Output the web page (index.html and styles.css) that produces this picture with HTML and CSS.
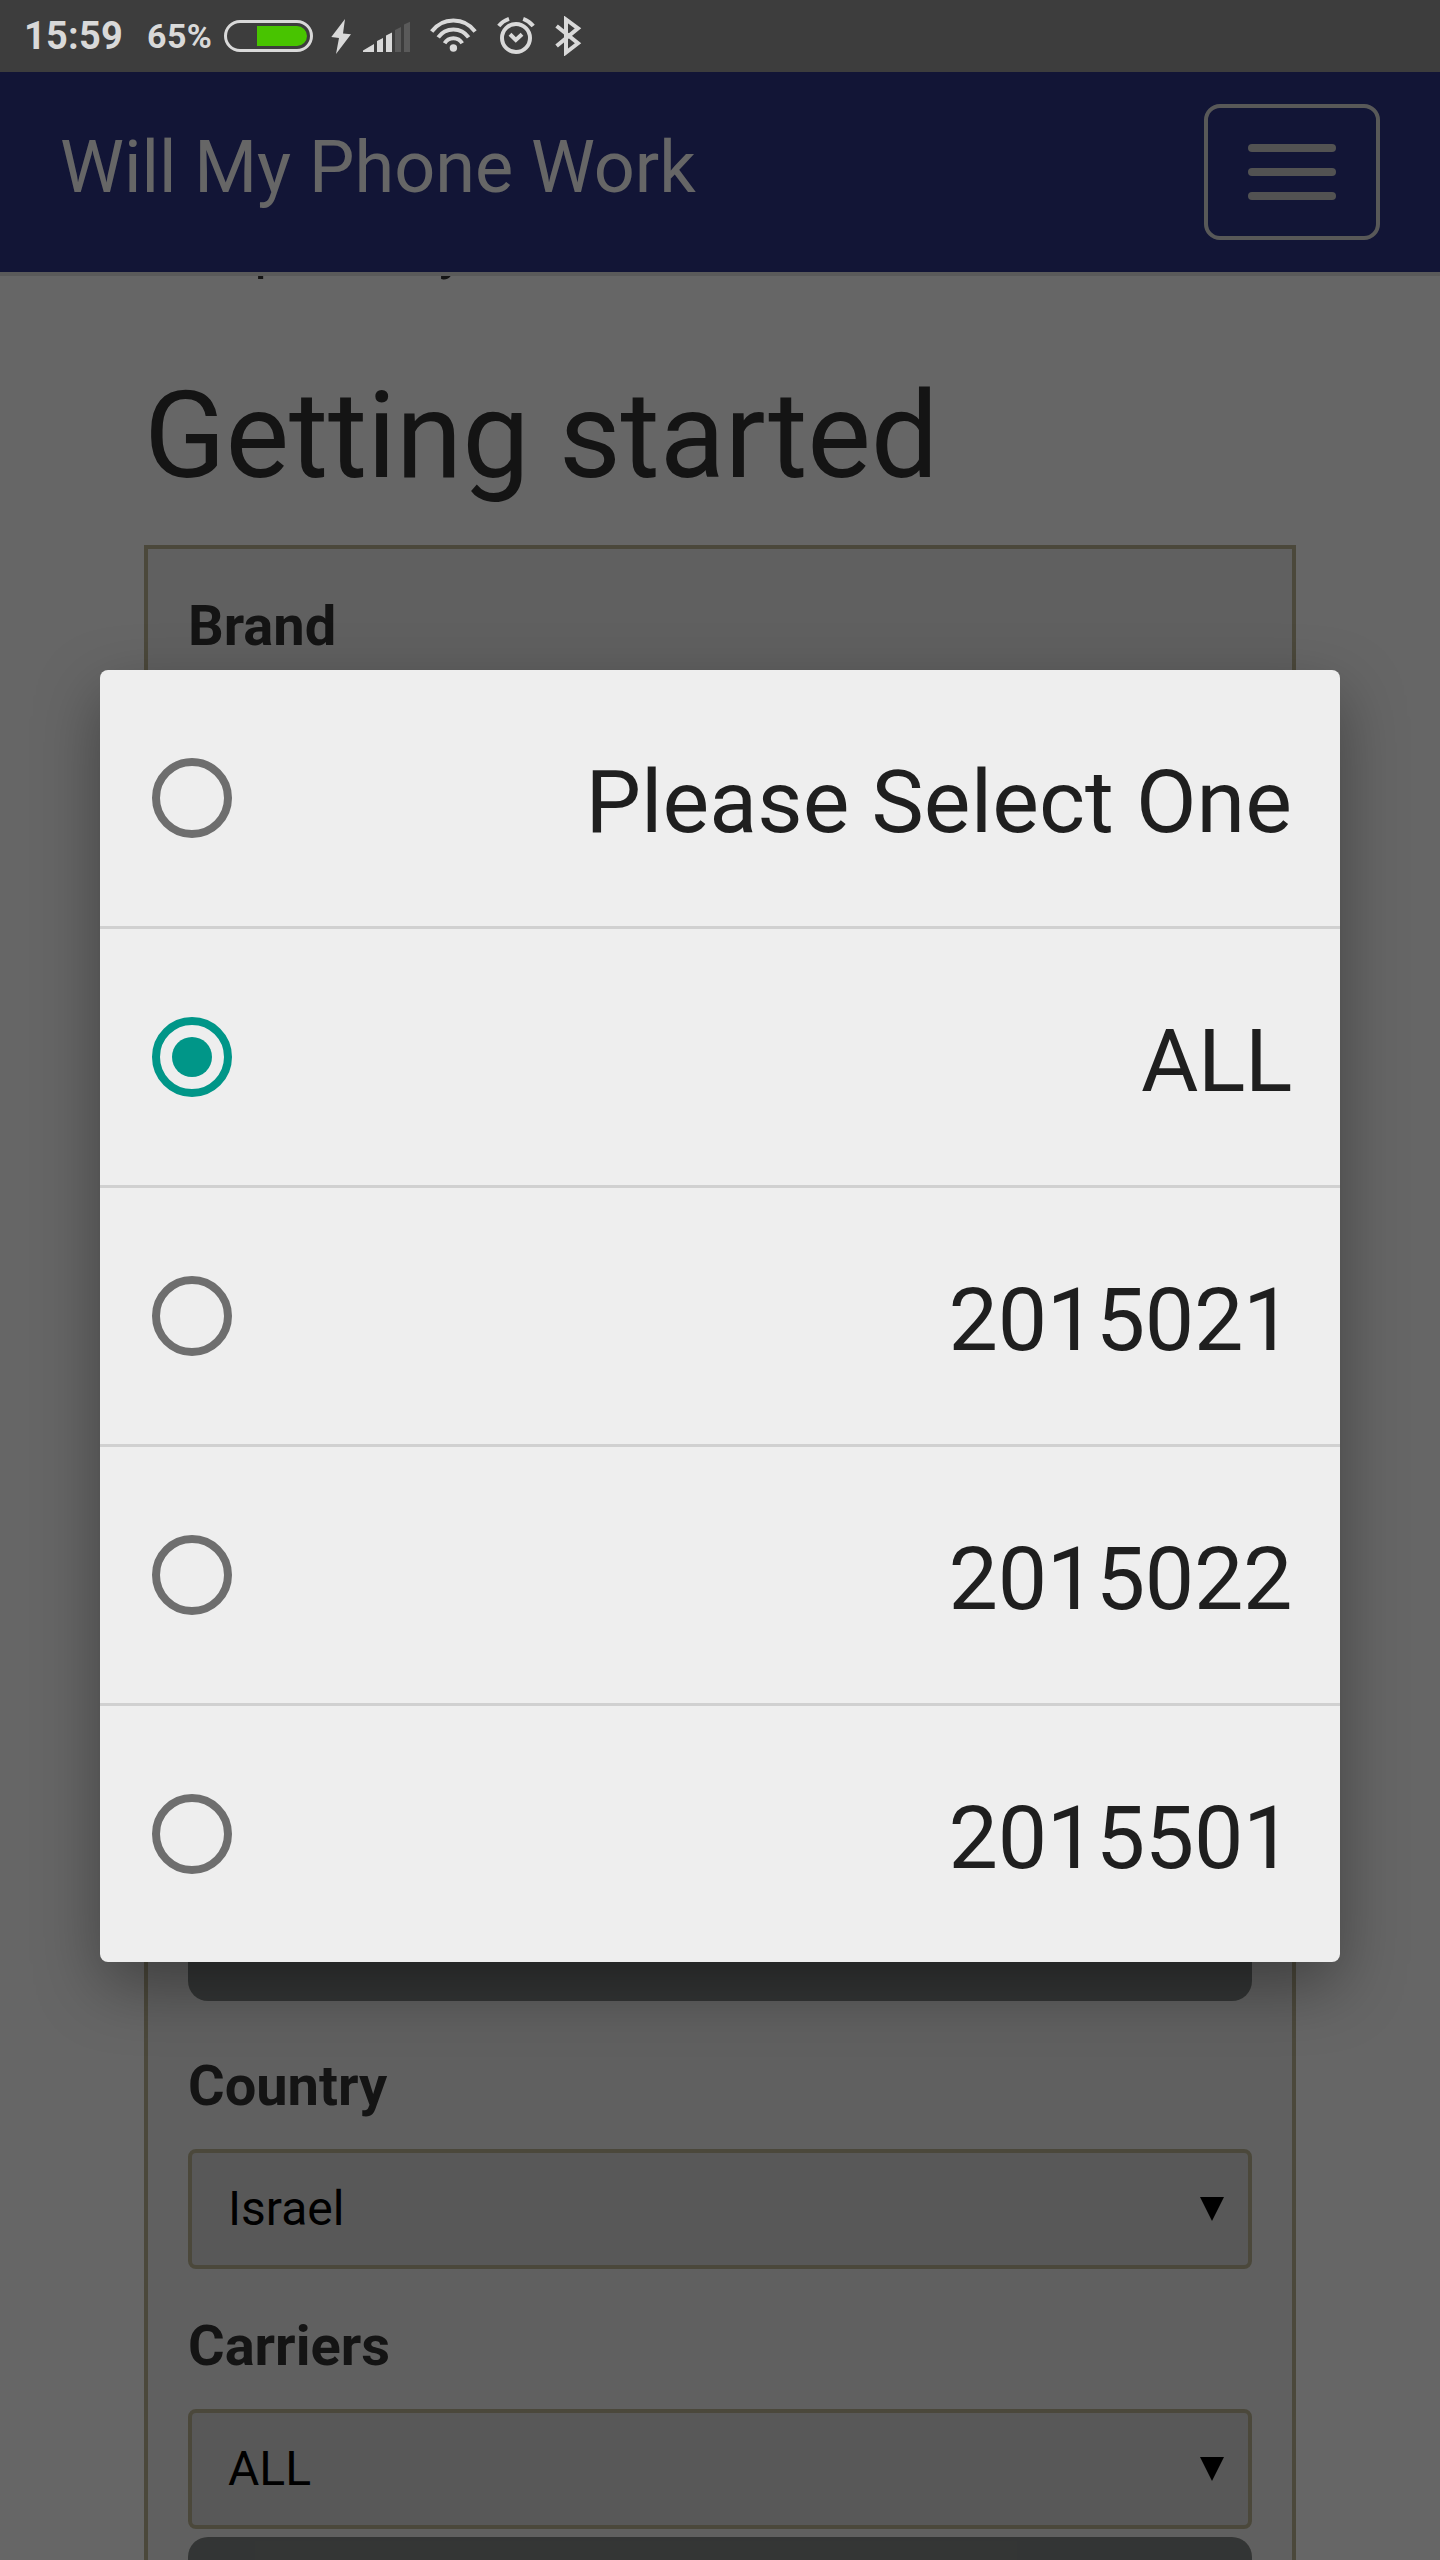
FILE: index.html
```
<!DOCTYPE html>
<html lang="en">
  <head>
    <meta charset="UTF-8" />
    <meta name="viewport" content="width=device-width, initial-scale=1.0" />
    <title>Will My Phone Work</title>
    <link rel="stylesheet" href="styles.css">
  </head>
  <body>
    <div class="status-bar">
      <span class="time">15:59</span>
      <span class="percent">65%</span>
      <div class="battery"><div class="battery-level"></div></div>
      <svg class="bolt" width="22" height="38" viewBox="330 18 22 38">
        <path d="M345 19L331.3 37L339 38L336 54L351 34.2L343 33.6Z" />
      </svg>
      <svg class="signal" width="48" height="34" viewBox="363 20 48 34">
        <path d="M363 52V50.5L374 44V52ZM377 52V41L383 38V52ZM386 52V35.5L392 32.5V52Z" />
        <path class="dim" d="M395 52V30L401 27V52ZM404 52V24.5L410 21.8V52Z" />
      </svg>
      <svg class="wifi line" width="48" height="36" viewBox="429 18 48 36">
        <path d="M431.7 31.5A26.8 26.8 0 0 1 475.1 31.5M438.2 37.4A18.6 18.6 0 0 1 468.6 37.4M444.6 43.2A10.2 10.2 0 0 1 462.2 43.2" />
        <circle class="dot" cx="453.4" cy="48" r="3.7" />
      </svg>
      <svg class="alarm line" width="40" height="40" viewBox="496 16 40 40">
        <circle cx="516" cy="38" r="14" />
        <path d="M510 34.3L515.8 40L522 34.3M498.8 26Q502.5 21 509 18.8M523.2 18.8Q529.5 21 533.2 26" />
      </svg>
      <svg class="bluetooth line" width="28" height="40" viewBox="554 16 28 40">
        <path d="M556.6 26L578 43.3L566 52.5V19.5L578 28.3L556.6 46" />
      </svg>
    </div>

    <div class="page">
      <nav class="navbar">
        <span class="navbar-brand">Will My Phone Work</span>
        <button class="navbar-toggle">
          <span class="icon-bar"></span>
          <span class="icon-bar"></span>
          <span class="icon-bar"></span>
        </button>
      </nav>

      <div class="container">
        <p class="intro">compatibility</p>
        <h1>Getting started</h1>
        <div class="panel">
          <div class="field first">
            <label>Brand</label>
          </div>
          <div class="btn"></div>
          <div class="field">
            <label>Country</label>
            <div class="select"><span>Israel</span><span class="arrow"></span></div>
          </div>
          <div class="field">
            <label>Carriers</label>
            <div class="select"><span>ALL</span><span class="arrow"></span></div>
          </div>
          <div class="btn"></div>
        </div>
      </div>

      <div class="overlay">
        <ul class="dialog">
          <li><span class="radio"></span><span class="option">Please Select One</span></li>
          <li><span class="radio checked"></span><span class="option model">ALL</span></li>
          <li><span class="radio"></span><span class="option model">2015021</span></li>
          <li><span class="radio"></span><span class="option model">2015022</span></li>
          <li><span class="radio"></span><span class="option model">2015501</span></li>
        </ul>
      </div>
    </div>
  </body>
</html>
```

FILE: styles.css
```
* {
  box-sizing: border-box;
}
body {
  margin: 0;
  height: 2560px;
  overflow: hidden;
  font-family: Roboto, sans-serif;
  color: #333;
  background: #fff;
}

/* status bar */
.status-bar {
  display: flex;
  align-items: center;
  height: 72px;
  padding-left: 24px;
  background: #3d3d3d;
  color: #d9d9d9;
  font-weight: bold;
}
.time {
  width: 123px;
  font-size: 38px;
  letter-spacing: 0.2px;
}
.percent {
  width: 77px;
  font-size: 34px;
  letter-spacing: 0.4px;
}
.battery {
  width: 89px;
  height: 32px;
  padding: 3px 3px 3px 30px;
  border: 3px solid #d9d9d9;
  border-radius: 16px;
}
.battery-level {
  height: 20px;
  background: #48c400;
  border-radius: 0 10px 10px 0;
}
.status-bar svg {
  fill: #d9d9d9;
}
.status-bar .line {
  fill: none;
  stroke: #d9d9d9;
  stroke-width: 4;
}
.status-bar .dot {
  fill: #d9d9d9;
  stroke: none;
}
.status-bar .dim {
  fill: #5a5a5a;
}
.bolt {
  margin: 2px 0 0 17px;
}
.signal {
  margin: 2px 0 0 11px;
}
.wifi {
  margin-left: 18px;
}
.alarm {
  margin-left: 19px;
}
.bluetooth {
  margin-left: 18px;
}

/* page */
.page {
  position: relative;
  height: 2488px;
  overflow: hidden;
}
.navbar {
  position: relative;
  z-index: 1;
  display: flex;
  justify-content: space-between;
  align-items: center;
  height: 204px;
  padding: 0 60px;
  background: #2d3587;
  border-bottom: 4px solid #e2e2e2;
}
.navbar-brand {
  font-size: 72px;
  line-height: 80px;
  margin-bottom: 8px;
  color: #fff;
}
.navbar-toggle {
  display: flex;
  flex-direction: column;
  justify-content: center;
  gap: 16px;
  width: 176px;
  height: 136px;
  padding: 0 40px;
  background: none;
  border: 4px solid #ddd;
  border-radius: 16px;
}
.icon-bar {
  height: 8px;
  background: #ccc;
  border-radius: 4px;
}
.container {
  padding: 0 144px;
}
.intro {
  margin: -67px 0 0;
  font-size: 56px;
  line-height: 80px;
}
h1 {
  margin: 81px 0 43px;
  font-size: 120px;
  font-weight: normal;
  line-height: 132px;
  letter-spacing: -0.2px;
}
.panel {
  height: 2100px;
  padding: 37px 40px;
  background: #f0f0f0;
  border: 4px solid #bbb494;
}
.field {
  margin-top: 37px;
}
.field.first {
  height: 1295px;
  margin-top: 0;
}
label {
  display: block;
  font-size: 56px;
  font-weight: bold;
  line-height: 80px;
}
.select {
  display: flex;
  justify-content: space-between;
  align-items: center;
  height: 120px;
  margin-top: 23px;
  padding: 0 24px 0 36px;
  background: #dcdcdc;
  border: 4px solid #bbb494;
  border-radius: 8px;
  color: #000;
  font-size: 48px;
}
.select span:first-child {
  margin-bottom: 2px;
}
.arrow {
  border: 12px solid transparent;
  border-top: 24px solid #000;
  border-bottom: 0;
}
.btn {
  height: 120px;
  background: #818684;
  border-radius: 20px;
}
.btn + .field {
  margin-top: 45px;
}
.field + .btn:last-child {
  margin-top: 8px;
}

/* option list */
.overlay {
  position: absolute;
  inset: 0;
  z-index: 2;
  padding: 598px 100px 0;
  background: rgba(0, 0, 0, 0.6);
}
.dialog {
  margin: 0;
  padding: 0;
  list-style: none;
  background: #eee;
  border-radius: 8px;
  box-shadow: 0 24px 64px rgba(0, 0, 0, 0.35);
  color: #1f1f1f;
  font-size: 88px;
}
.dialog li {
  display: flex;
  justify-content: space-between;
  align-items: center;
  height: 256px;
  padding: 0 48px 0 52px;
}
.dialog li + li {
  height: 259px;
  border-top: 3px solid #d0d0d0;
}
.option {
  padding-top: 7px;
  letter-spacing: 0.1px;
}
.option.model {
  letter-spacing: -0.4px;
}
.radio {
  width: 80px;
  height: 80px;
  border: 8px solid #6e6e6e;
  border-radius: 50%;
}
.radio.checked {
  padding: 12px;
  border-color: #009688;
  background: #009688 content-box;
}
```
